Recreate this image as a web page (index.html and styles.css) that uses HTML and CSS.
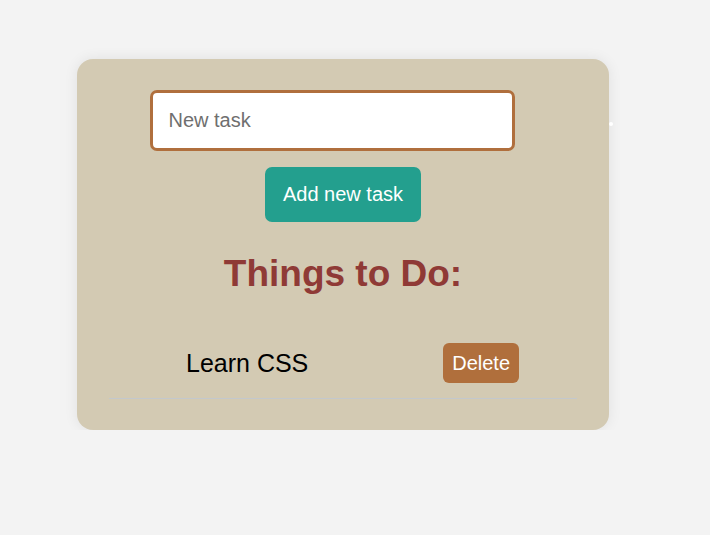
FILE: index.html
```html
<!DOCTYPE html>
<html>
<head>
<meta charset="utf-8">
<link rel="stylesheet" href="styles.css">
</head>
<body>
<div class="card">
  <span class="dot"></span>
  <form class="add-form">
    <input class="task-input" type="text" placeholder="New task">
    <button class="add-btn" type="button">Add new task</button>
  </form>
  <h1 class="title">Things to Do:</h1>
  <ul class="list">
    <li class="item"><span class="item-text">Learn CSS</span><button class="del-btn" type="button">Delete</button></li>
  </ul>
</div>
</body>
</html>
```
FILE: styles.css
```css
html, body {
  margin: 0;
  padding: 0;
  background: #f3f3f3;
  font-family: "Liberation Sans", Arial, sans-serif;
}
body {
  padding: 59px 0 0 77px;
}
.card {
  position: relative;
  width: 532px;
  box-sizing: border-box;
  padding: 31px 32px 31px;
  background: #d3cab3;
  border-radius: 16px;
  box-shadow: 0 0 14px rgba(0, 0, 0, 0.08);
}
.dot {
  position: absolute;
  left: 532px;
  top: 63px;
  width: 4px;
  height: 4px;
  border-radius: 50%;
  background: #fff;
}
.add-form {
  display: flex;
  flex-direction: column;
  align-items: center;
  gap: 16px;
}
.task-input {
  box-sizing: border-box;
  width: 365px;
  height: 61px;
  margin-left: -22px;
  padding: 0 16px;
  border: 3px solid #b06f3d;
  border-radius: 7px;
  background: #fff;
  font-family: inherit;
  font-size: 20px;
  color: #222;
  outline: none;
}
.task-input::placeholder {
  color: #6f6f6f;
}
.add-btn {
  height: 55px;
  padding: 0 18px;
  border: none;
  border-radius: 7px;
  background: #239f8e;
  color: #fff;
  font-family: inherit;
  font-size: 20px;
}
.title {
  margin: 31px 0 0;
  text-align: center;
  font-size: 37px;
  font-weight: bold;
  color: #8f3a36;
}
.list {
  list-style: none;
  margin: 32px 0 0;
  padding: 0;
}
.item {
  display: flex;
  align-items: center;
  justify-content: space-between;
  padding: 16px 58px 15px 77px;
  border-bottom: 1px solid #c3c8cd;
}
.item-text {
  font-size: 25px;
  color: #000;
}
.del-btn {
  height: 40px;
  padding: 0 9px;
  border: none;
  border-radius: 6px;
  background: #b06f3c;
  color: #fff;
  font-family: inherit;
  font-size: 20px;
}
```
